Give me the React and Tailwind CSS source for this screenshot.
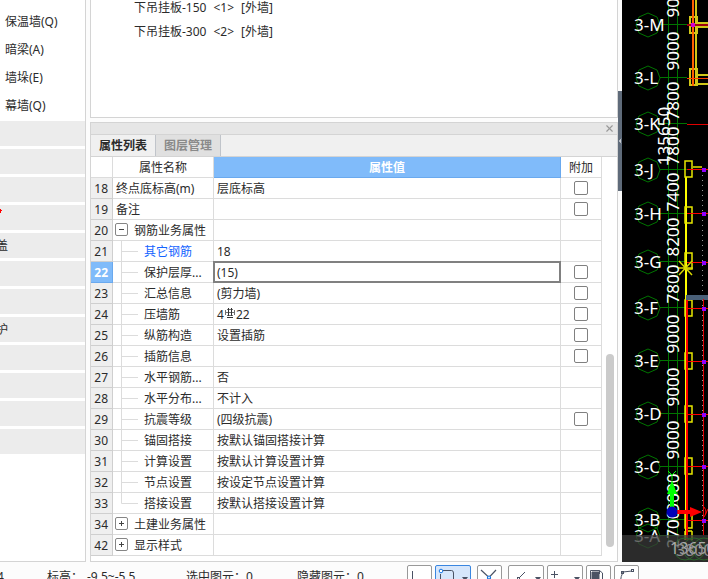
import { X, ChevronLeft } from 'lucide-react'

const components = ['保温墙(Q)', '暗梁(A)', '墙垛(E)', '幕墙(Q)']

const groups = [
  { id: 1 }, { id: 2 }, { id: 3 },
  { id: 4, alert: true },
  { id: 5, label: '盖' },
  { id: 6 }, { id: 7 },
  { id: 8, label: '护' },
  { id: 9 }, { id: 10 }, { id: 11 }, { id: 12 },
]

const elements = [
  ['下吊挂板-150', '<1>', '[外墙]'],
  ['下吊挂板-300', '<2>', '[外墙]'],
]

const rows = [
  { no: 18, name: '终点底标高(m)', value: '层底标高', check: true },
  { no: 19, name: '备注', value: '', check: true },
  { no: 20, name: '钢筋业务属性', value: '', toggle: 'open' },
  { no: 21, name: '其它钢筋', value: '18', child: true, link: true },
  { no: 22, name: '保护层厚...', value: '(15)', child: true, check: true, active: true },
  { no: 23, name: '汇总信息', value: '(剪力墙)', child: true, check: true },
  { no: 24, name: '压墙筋', value: '4', rebar: '22', child: true, check: true },
  { no: 25, name: '纵筋构造', value: '设置插筋', child: true, check: true },
  { no: 26, name: '插筋信息', value: '', child: true, check: true },
  { no: 27, name: '水平钢筋...', value: '否', child: true },
  { no: 28, name: '水平分布...', value: '不计入', child: true },
  { no: 29, name: '抗震等级', value: '(四级抗震)', child: true, check: true },
  { no: 30, name: '锚固搭接', value: '按默认锚固搭接计算', child: true },
  { no: 31, name: '计算设置', value: '按默认计算设置计算', child: true },
  { no: 32, name: '节点设置', value: '按设定节点设置计算', child: true },
  { no: 33, name: '搭接设置', value: '按默认搭接设置计算', child: true, last: true },
  { no: 34, name: '土建业务属性', value: '', toggle: 'closed' },
  { no: 42, name: '显示样式', value: '', toggle: 'closed' },
]

const axes = [
  { name: '3-M', y: 25 }, { name: '3-L', y: 78 }, { name: '3-K', y: 124 },
  { name: '3-J', y: 170 }, { name: '3-H', y: 214 }, { name: '3-G', y: 262 },
  { name: '3-F', y: 308 }, { name: '3-E', y: 361 }, { name: '3-D', y: 414 },
  { name: '3-C', y: 467 }, { name: '3-B', y: 520 }, { name: '3-A', y: 536 },
]

const dims = [
  { text: '9000', y: -2 }, { text: '9000', y: 51 }, { text: '7800', y: 101 },
  { text: '7800', y: 146 }, { text: '7400', y: 192 }, { text: '8200', y: 237 },
  { text: '7800', y: 284 }, { text: '9000', y: 334 }, { text: '9000', y: 387 },
  { text: '9000', y: 440 }, { text: '9000', y: 493 }, { text: '2700', y: 529 },
]

function Sidebar() {
  return (
    <nav className="flex w-[86px] shrink-0 flex-col overflow-hidden border-r border-b border-[#d4d4d4] bg-white pt-2">
      {components.map((c) => (
        <a key={c} href="#" className="flex h-7 shrink-0 items-center pl-[5px] whitespace-nowrap">{c}</a>
      ))}
      <div className="mt-px flex flex-col gap-[3px]">
        {groups.map((g) => (
          <div key={g.id} className="flex h-[25px] items-center bg-[#ececec]">
            {g.alert && (
              <svg width="3" height="8" viewBox="0 0 3 8" className="mb-4">
                <path d="M0 3H1V4H2V5H1V7H0z" fill="#f00" />
              </svg>
            )}
            {g.label && <span className="-ml-1">{g.label}</span>}
          </div>
        ))}
      </div>
    </nav>
  )
}

function Branch({ last }) {
  return (
    <svg width="31" height="21" className="shrink-0" fill="none" stroke="#dcdcdc">
      <path d={last ? 'M8.5 0V10.5H25' : 'M8.5 0V21M8.5 10.5H25'} />
    </svg>
  )
}

function Toggle({ open, label }) {
  return (
    <button type="button" aria-label={label} className="mr-[6px] ml-[2px] mb-[2px] shrink-0">
      <svg width="13" height="13" fill="none" stroke="#858585">
        <rect x=".5" y=".5" width="12" height="12" rx="1.5" />
        <path d={open ? 'M4 6.5h5' : 'M4 6.5h5M6.5 4v5'} stroke="#444" />
      </svg>
    </button>
  )
}

function RebarSign() {
  return (
    <svg width="12" height="12" className="mb-1" fill="none" stroke="#333">
      <path d="M3 2.5H9M2 5.5H10M3 8.5H9M1.5 3V8M10.5 3V8" strokeWidth=".7" />
      <path d="M4.5 1V9M7.5 1V9M3 10.5H9" />
    </svg>
  )
}

function Row({ row }) {
  return (
    <tr className="h-[21px]">
      <th
        scope="row"
        className={row.active
          ? 'border-r border-b border-[#6aa9ee] bg-[#80bbfa] pt-[2px] pr-1 text-right font-bold text-white'
          : 'border-r border-b border-[#cfcfcf] bg-[#efefef] pt-[2px] pr-1 text-right font-normal'}
      >
        {row.no}
      </th>
      <td className="border-r border-b border-[#dcdcdc]">
        <div className="flex h-5 items-center overflow-hidden whitespace-nowrap">
          {row.child && <Branch last={row.last} />}
          {row.toggle && <Toggle open={row.toggle === 'open'} label={row.name} />}
          <span className={row.link ? 'pt-[2px] text-[#1464ff]' : row.child || row.toggle ? 'pt-[2px]' : 'pt-[2px] pl-[3px]'}>{row.name}</span>
        </div>
      </td>
      <td className="border-r border-b border-[#dcdcdc]">
        <div className={row.active
          ? 'relative -m-px flex h-[22px] items-center border-2 border-[#808080] pt-[2px] pl-[2px]'
          : 'flex h-5 items-center pt-[2px] pl-[3px]'}
        >
          {row.value}
          {row.rebar && <><RebarSign />{row.rebar}</>}
        </div>
      </td>
      <td className="border-r border-b border-[#dcdcdc]">
        {row.check && (
          <input
            type="checkbox"
            aria-label={`附加 ${row.name}`}
            className="mx-auto block size-[14px] appearance-none rounded-xs border border-[#808080] bg-white"
          />
        )}
      </td>
    </tr>
  )
}

function Properties() {
  return (
    <section className="mt-1 flex min-h-0 flex-1 flex-col border border-[#d4d4d4] bg-white">
      <div className="flex h-[11px] shrink-0 items-center justify-end bg-[#e6e6e6] pr-[2px]">
        <button type="button" aria-label="关闭"><X className="size-[11px] text-[#999]" strokeWidth={2.5} /></button>
      </div>
      <div role="tablist" className="flex h-[23px] shrink-0 border-y border-[#d4d4d4] bg-[#f0f0f0] font-bold">
        <button type="button" role="tab" aria-selected="true" className="w-[65px] border-r border-[#c0c4ca] bg-[#f0f0f0] pt-px">属性列表</button>
        <button type="button" role="tab" aria-selected="false" className="w-[65px] border-r border-[#c0c4ca] bg-[#e0e0e0] pt-px text-[#8a8a8a]">图层管理</button>
      </div>
      <div className="flex min-h-0 flex-1">
        <div className="min-w-0 flex-1 overflow-hidden bg-white">
          <table className="w-full table-fixed border-separate border-spacing-0">
            <colgroup>
              <col className="w-[22px]" />
              <col className="w-[101px]" />
              <col />
              <col className="w-[41px]" />
            </colgroup>
            <thead>
              <tr className="h-[21px]">
                <td className="border-r border-b border-[#dcdcdc]" />
                <th className="border-r border-b border-[#dcdcdc] pt-[2px] font-normal">属性名称</th>
                <th className="border-r border-b border-[#6aa9ee] bg-[#80bbfa] pt-[2px] font-bold text-white">属性值</th>
                <th className="border-r border-b border-[#dcdcdc] pt-[2px] font-normal">附加</th>
              </tr>
            </thead>
            <tbody>
              {rows.map((r) => <Row key={r.no} row={r} />)}
            </tbody>
          </table>
        </div>
        <div className="flex w-[15px] shrink-0 flex-col items-center justify-end pb-[14px]">
          <div className="h-[193px] w-2 rounded-full bg-[#cbcbcb]" />
        </div>
      </div>
    </section>
  )
}

function Drawing() {
  return (
    <svg className="size-full bg-black" fill="none" fontFamily="'Noto Sans', 'Open Sans', sans-serif" fontSize="17">
      <g stroke="#007400">
        <path d="M46.5 0V545M55.5 0V545" />
        {axes.map((a) => (
          <g key={a.name} transform={`translate(26 ${a.y})`}>
            <path d="M0-12L9-8L12 0L9 8L0 12L-9 8L-12 0L-9-8Z" />
            <path d="M12-.5H39" />
          </g>
        ))}
      </g>

      {/* walls and columns */}
      <g stroke="#d0c818" strokeWidth="2">
        <path d="M74 0V84" />
        <path d="M76 23H86M76 27H86M76 75H86M76 84H86" />
        <rect x="68" y="17" width="7" height="16" />
        <rect x="68" y="69" width="7" height="16" />
      </g>
      <path d="M71 0V86" stroke="#ff6000" strokeWidth="2" />
      <path d="M65 25H86" stroke="#a00010" strokeWidth="2" />
      <path d="M65 78.5H86" stroke="#ff4000" />
      <rect x="69" y="23" width="4" height="4" fill="#d000d0" />
      <path d="M65 124.5H86" stroke="#e00000" />
      <path d="M80.5 170V535" stroke="#999" strokeDasharray="1 4" />
      <path d="M64 177V300" stroke="#ff0" strokeWidth="2" />
      <path d="M63.5 300V540" stroke="#ff0" />
      <g stroke="#e8e800" strokeWidth="1.5">
        <path d="M71 167H80" />
        {[169, 215, 261, 308, 361, 414, 466].map((y) => (
          <rect key={y} x="63" y={y - 8} width="7" height="16" />
        ))}
        <path d="M63 512V528H70V512M63 531V540M70 531V540M63 531H70" />
      </g>
      <rect x="64" y="295" width="22" height="5" fill="#4a6078" />
      <path d="M81.5 299V535" stroke="#e00000" />
      <path d="M65 300V540" stroke="#f00" strokeWidth="2" />
      {[169, 213, 262, 308, 361, 414, 466, 520].map((y) => (
        <g key={y}>
          <path d={`M65 ${y}.5H86`} stroke="#f00" />
          <rect x="80" y={y - 1} width="4" height="4" fill="#9000ff" />
        </g>
      ))}
      <path d="M57 261L70 275M70 261L57 275M56 268H71" stroke="#d8d800" strokeWidth="1.5" />

      <g fill="#fff">
        {axes.map((a) => <text key={a.name} x="12" y={a.y + 6}>{a.name}</text>)}
        {dims.map((d) => (
          <text key={d.y} textAnchor="middle" transform={`translate(57 ${d.y}) rotate(-90)`}>{d.text}</text>
        ))}
        <text textAnchor="middle" transform="translate(48 136) rotate(-90)">135650</text>
      </g>

      {/* dimmed strip under the drawing area */}
      <rect x="0" y="535" width="100%" height="28" fill="#3a3a3a" fillOpacity=".75" />
      <g stroke="#2c642c">
        <circle cx="63" cy="549" r="11" />
        <circle cx="72" cy="549" r="11" />
        <circle cx="82" cy="549" r="11" />
      </g>
      <g fill="#aaa" fontSize="16">
        <text x="48" y="554">13650</text>
        <text x="54" y="556" fill="#909090">3800</text>
      </g>

      {/* coordinate origin */}
      <path d="M50 512V488" stroke="#0f0" strokeWidth="4" />
      <path d="M45 494L50 480L55 494Z" fill="#0f0" />
      <path d="M46 471L50 475L54 471M50 475V480" stroke="#0f0" />
      <path d="M50 512H70" stroke="#f00" strokeWidth="4" />
      <path d="M68 507L80 512L68 517Z" fill="#f00" />
      <path d="M82 507Q86 512 82 517M86 509L83 515" stroke="#f00" />
      <circle cx="50" cy="512" r="5.5" fill="#0000b8" />
    </svg>
  )
}

const toolButton = 'h-[22px] shrink-0 rounded-xs border border-[#999] bg-white'

function StatusBar() {
  return (
    <footer className="flex h-[17px] shrink-0 items-start overflow-hidden bg-[#fcfcfc] whitespace-nowrap">
      <div className="flex w-[407px] shrink-0 pt-[7px]">
        <span className="-ml-[3px] w-[50px]">4</span>
        <span className="w-10">标高：</span>
        <span className="w-[99px]">-9.5~-5.5</span>
        <span className="w-[111px]">选中图元：0</span>
        <span>隐藏图元：0</span>
      </div>
      <div className="flex pt-[3px]">
        <button type="button" aria-label="正交" className={`${toolButton} w-[25px]`}>
          <svg width="23" height="20" fill="none" stroke="#4a5264"><path d="M4.5 5V13.5H10" /></svg>
        </button>
        <button type="button" aria-label="对象捕捉" className="ml-[3px] h-[22px] w-9 shrink-0 rounded-xs border border-[#3a86e0] bg-[#d6e6fb]">
          <svg width="34" height="20" fill="none" stroke="#4a5264">
            <path d="M7 4.5H15.5Q17.5 4.5 17.5 7V18M4.5 8V18" />
            <circle cx="5" cy="5" r="1.8" stroke="#1677e6" fill="#fff" />
            <path d="M26 11h6l-3 4z" fill="#4a5264" stroke="none" />
          </svg>
        </button>
        <button type="button" aria-label="交点" className={`${toolButton} ml-[6px] w-[25px]`}>
          <svg width="23" height="20" fill="none" stroke="#4a5264" strokeWidth="1.2">
            <path d="M3 4L11 11.5L18 4M11 11.5L5 18M11 11.5L17 18" />
            <circle cx="11" cy="11.5" r="1.5" stroke="#1677e6" fill="#fff" />
          </svg>
        </button>
        <button type="button" aria-label="延长线" className={`${toolButton} ml-[6px] w-9`}>
          <svg width="34" height="20" fill="none" stroke="#4a5264">
            <path d="M16 6L10 12" /><rect x="8.5" y="11.5" width="2" height="2" />
            <path d="M26 11h6l-3 4z" fill="#4a5264" stroke="none" />
          </svg>
        </button>
        <button type="button" aria-label="偏移" className={`${toolButton} ml-[3px] w-9`}>
          <svg width="34" height="20" fill="none" stroke="#4a5264">
            <path d="M3 8.5H10M6.5 5V12" />
            <path d="M26 11h6l-3 4z" fill="#4a5264" stroke="none" />
          </svg>
        </button>
        <button type="button" aria-label="图层显示" className={`${toolButton} ml-[3px] w-[25px]`}>
          <svg width="23" height="20" fill="none" stroke="#4a5264">
            <path d="M5 6H12V18H5Z" fill="#4a5264" />
            <path d="M3.5 18V4.5H12.5V8M12.5 4.5L15.5 7V18" />
          </svg>
        </button>
        <button type="button" aria-label="折线" className={`${toolButton} ml-[3px] w-[25px]`}>
          <svg width="23" height="20" fill="none" stroke="#4a5264">
            <path d="M5 18Q6 9 8 6L17 5" />
            <rect x="6.5" y="5.5" width="2" height="2" /><rect x="16.5" y="3.5" width="2" height="2" />
          </svg>
        </button>
      </div>
    </footer>
  )
}

export default function App() {
  return (
    <div className="flex h-screen flex-col overflow-hidden bg-[#fcfcfc] font-['Noto_Sans','Noto_Sans_CJK_SC',sans-serif] text-[12px] leading-4 text-[#2b2b2b]">
      <main className="flex min-h-0 flex-1">
        <Sidebar />
        <div className="ml-1 flex min-w-0 flex-1 flex-col">
          <ul className="h-[118px] shrink-0 border-x border-b border-[#d4d4d4] bg-white pl-[43px]">
            {elements.map(([name, count, type]) => (
              <li key={name} className="flex h-6 items-center gap-[7px] pb-2">
                <span>{name}</span><span>{count}</span><span>{type}</span>
              </li>
            ))}
          </ul>
          <Properties />
        </div>
        <div className="flex w-1 shrink-0 flex-col pt-[91px]">
          <button type="button" aria-label="收起面板" className="flex h-[100px] items-center justify-center bg-[#5f6b7a]">
            <ChevronLeft className="size-2 shrink-0 fill-[#c8ccd2] text-[#c8ccd2]" />
          </button>
        </div>
        <div className="w-[86px] shrink-0 overflow-hidden">
          <Drawing />
        </div>
      </main>
      <StatusBar />
    </div>
  )
}
